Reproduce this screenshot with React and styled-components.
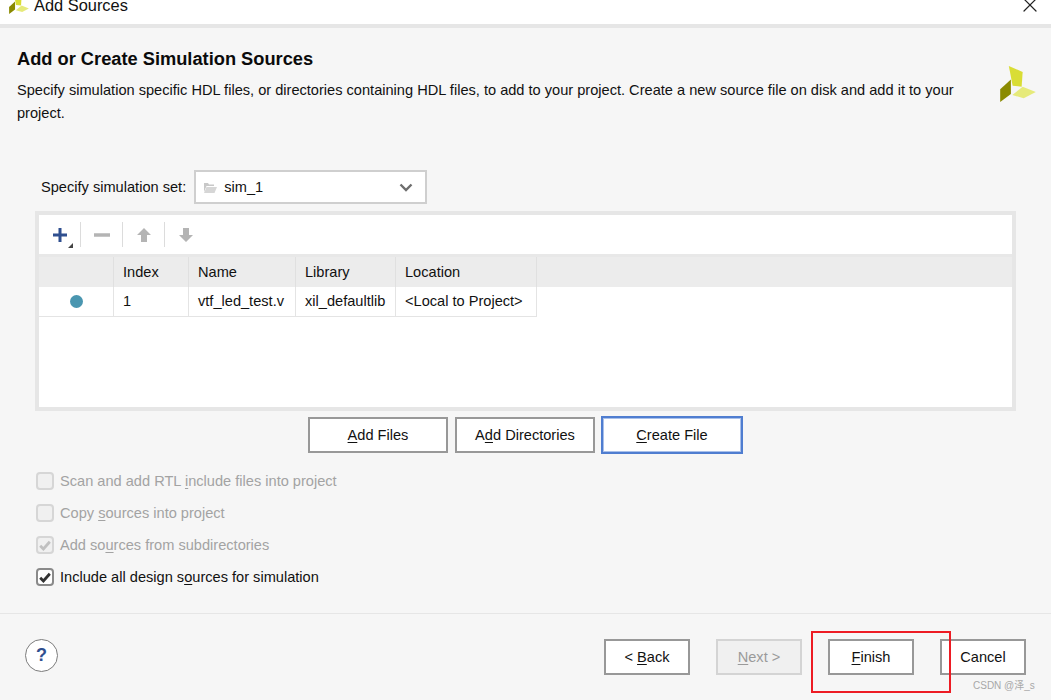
import React from 'react';
import styled, { createGlobalStyle } from 'styled-components';
import { X } from 'lucide-react';

const GlobalStyle = createGlobalStyle`
  html, body {
    margin: 0;
    padding: 0;
    background: #f6f6f6;
  }
  body {
    font-family: "Liberation Sans", Arial, sans-serif;
    font-size: 14.6px;
    color: #111;
  }
`;

const Window = styled.div`
  position: relative;
  width: 1051px;
  height: 700px;
  overflow: hidden;
  background: #f6f6f6;
  display: flex;
  flex-direction: column;
`;

const TitleBar = styled.div`
  flex: none;
  box-sizing: border-box;
  height: 28px;
  background: #fff;
  border-bottom: 4px solid #e6e6e6;
  display: flex;
  align-items: flex-start;
  overflow: hidden;
  padding: 0 9px 0 9px;
`;

const TitleIcon = styled.svg`
  flex: none;
  width: 20px;
  height: 20px;
  margin-top: -6px;
`;

const TitleText = styled.span`
  font-size: 16.4px;
  line-height: 20px;
  margin: -5px 0 0 5px;
  flex: 1;
`;

const CloseIcon = styled(X)`
  flex: none;
  margin-top: -7px;
  width: 24px;
  height: 24px;
  color: #222;
`;

const Head = styled.div`
  display: flex;
  justify-content: space-between;
  padding: 20px 15px 0 17px;
`;

const HeadText = styled.div`
  width: 945px;
`;

const Heading = styled.h1`
  margin: 0 0 9px;
  font-size: 18.25px;
  line-height: 22px;
  font-weight: 700;
  color: #0b0b0b;
`;

const Description = styled.p`
  margin: 0;
  line-height: 23px;
`;

const BrandLogo = styled.svg`
  flex: none;
  width: 36px;
  height: 36px;
  margin-top: 18px;
`;

const SetRow = styled.div`
  display: flex;
  align-items: center;
  gap: 8px;
  margin: 45px 0 0 41px;
`;

const SetSelect = styled.div`
  box-sizing: border-box;
  width: 233px;
  height: 34px;
  background: #fff;
  border: 2px solid #cfcfcf;
  display: flex;
  align-items: center;
  padding: 0 12px 0 7px;
  gap: 7px;
`;

const SelectValue = styled.span`
  flex: 1;
`;

const Panel = styled.div`
  box-sizing: border-box;
  width: 981px;
  height: 200px;
  margin: 7px 0 0 35px;
  border: 4px solid #e6e6e6;
  background: #fff;
  display: flex;
  flex-direction: column;
`;

const Toolbar = styled.div`
  flex: none;
  box-sizing: border-box;
  height: 42px;
  border-bottom: 3px solid #e8e8e8;
  display: flex;
  align-items: center;
`;

const ToolButton = styled.div`
  position: relative;
  width: 41px;
  height: 26px;
  display: flex;
  align-items: center;
  justify-content: center;
`;

const ToolSep = styled.div`
  width: 1px;
  height: 25px;
  background: #dcdcdc;
`;

const MenuCorner = styled.span`
  position: absolute;
  right: 7px;
  bottom: 0;
  width: 0;
  height: 0;
  border-left: 5px solid transparent;
  border-bottom: 5px solid #444;
`;

const Table = styled.div`
  display: grid;
  grid-template-columns: 75px 75px 107px 100px 141px 1fr;
`;

const HeadCell = styled.div`
  box-sizing: border-box;
  height: 30px;
  line-height: 30px;
  background: #ececec;
  padding-left: 9px;
  border-right: ${p => (p.$last ? 'none' : '1px solid #e0e0e0')};
`;

const Cell = styled.div`
  box-sizing: border-box;
  height: 30px;
  line-height: 29px;
  padding-left: 9px;
  border-bottom: ${p => (p.$empty ? 'none' : '1px solid #e4e4e4')};
  border-right: ${p => (p.$empty ? 'none' : '1px solid #e4e4e4')};
  display: flex;
  align-items: center;
  justify-content: ${p => (p.$center ? 'center' : 'flex-start')};
`;

const StatusDot = styled.span`
  display: block;
  width: 13px;
  height: 13px;
  border-radius: 50%;
  background: #4a96b0;
  margin: 0 0 0 -9px;
`;

const Actions = styled.div`
  display: flex;
  align-items: center;
  height: 38px;
  margin: 5px 0 0 308px;
`;

const PushButton = styled.div`
  box-sizing: border-box;
  width: ${p => p.$width}px;
  height: ${p => (p.$focus ? 38 : 36)}px;
  margin-right: ${p => p.$gap || 0}px;
  background: ${p => (p.$disabled ? '#f0f0f0' : '#fff')};
  color: ${p => (p.$disabled ? '#9a9a9a' : '#111')};
  border: ${p => {
    if (p.$focus) return '2px solid #4f7dd0';
    if (p.$disabled) return '2px solid #d4d4d4';
    return '2px solid #989898';
  }};
  box-shadow: ${p => (p.$focus ? 'inset 0 0 0 1px #a9c0ea' : 'none')};
  display: flex;
  align-items: center;
  justify-content: center;
`;

const Key = styled.span`
  text-decoration: underline;
  text-underline-offset: 2px;
`;

const Options = styled.div`
  display: flex;
  flex-direction: column;
  margin: 11px 0 0 36px;
`;

const Option = styled.div`
  height: 32px;
  display: flex;
  align-items: center;
  gap: 6px;
  color: ${p => (p.$disabled ? '#a3a3a3' : '#111')};
`;

const CheckBox = styled.span`
  box-sizing: border-box;
  width: 18px;
  height: 18px;
  border-radius: 4px;
  border: 2px solid ${p => (p.$disabled ? '#d6d6d6' : '#8a8a8a')};
  background: ${p => (p.$disabled ? '#f0f0f0' : '#fff')};
  display: flex;
  align-items: center;
  justify-content: center;
`;

const Footer = styled.div`
  flex: 1;
  margin-top: 20px;
  border-top: 1px solid #e6e6e6;
  padding: 25px 25px 0;
  display: flex;
  align-items: flex-start;
  gap: 26px;
`;

const HelpButton = styled.div`
  box-sizing: border-box;
  width: 33px;
  height: 33px;
  margin-right: auto;
  border-radius: 50%;
  border: 1px solid #7c7c7c;
  background: #fff;
  color: #2f4f8f;
  font-weight: 700;
  font-size: 18px;
  display: flex;
  align-items: center;
  justify-content: center;
`;

const Highlight = styled.div`
  position: absolute;
  left: 811px;
  top: 631px;
  width: 140px;
  height: 62px;
  box-sizing: border-box;
  border: 2px solid #ed1c24;
`;

const Watermark = styled.span`
  position: absolute;
  left: 973px;
  top: 679px;
  font-size: 10px;
  line-height: 13px;
  color: #a8a8a8;
  font-family: "Liberation Sans", "Noto Sans CJK SC", sans-serif;
`;

const LogoShapes = () => (
  <>
    <polygon points="0,67 31,39 31,81 0,104" fill="#8a8a00" />
    <polygon points="25,0 65,17 62,60 36,57" fill="#d9dd35" />
    <polygon points="35,84 65,60 103,75 68,93" fill="#e6ea7a" />
  </>
);

const PlusIcon = () => (
  <svg width="16" height="16" viewBox="0 0 16 16">
    <path d="M8 1v14M1 8h14" stroke="#2f4f8f" strokeWidth="3" fill="none" />
  </svg>
);

const MinusIcon = () => (
  <svg width="16" height="16" viewBox="0 0 16 16">
    <path d="M0 8h16" stroke="#b4b4b4" strokeWidth="3.5" fill="none" />
  </svg>
);

const ArrowIcon = ({ down }) => (
  <svg width="14" height="16" viewBox="0 0 14 16">
    <path
      d={down ? 'M4 1h6v7h4l-7 7-7-7h4z' : 'M7 1l7 7h-4v7H4V8H0z'}
      fill="#b4b4b4"
    />
  </svg>
);

const FolderIcon = () => (
  <svg width="14" height="13" viewBox="0 0 14 13">
    <path d="M1 2h4l1 1.5h5V5H3.5L1 11z" fill="#c8c8c8" />
    <path d="M3.5 6H14l-2.5 6H1z" fill="#d6d6d6" />
  </svg>
);

const ChevronIcon = () => (
  <svg width="14" height="9" viewBox="0 0 14 9">
    <path d="M1.5 1.5L7 7l5.5-5.5" stroke="#6e6e6e" strokeWidth="2.4" fill="none" />
  </svg>
);

const CheckMark = ({ disabled }) => (
  <svg width="12" height="11" viewBox="0 0 12 11">
    <path
      d="M1.2 5.8L4.4 9 10.8 1.8"
      stroke={disabled ? '#c0c0c0' : '#333'}
      strokeWidth="2.8"
      fill="none"
    />
  </svg>
);

export default function App() {
  return (
    <Window>
      <GlobalStyle />
      <TitleBar>
        <TitleIcon viewBox="0 0 103 104"><LogoShapes /></TitleIcon>
        <TitleText>Add Sources</TitleText>
        <CloseIcon strokeWidth={1.2} />
      </TitleBar>

      <Head>
        <HeadText>
          <Heading>Add or Create Simulation Sources</Heading>
          <Description>
            Specify simulation specific HDL files, or directories containing HDL files, to add to your project. Create a new source file on disk and add it to your project.
          </Description>
        </HeadText>
        <BrandLogo viewBox="0 0 103 104"><LogoShapes /></BrandLogo>
      </Head>

      <SetRow>
        <span>Specify simulation set:</span>
        <SetSelect>
          <FolderIcon />
          <SelectValue>sim_1</SelectValue>
          <ChevronIcon />
        </SetSelect>
      </SetRow>

      <Panel>
        <Toolbar>
          <ToolButton><PlusIcon /><MenuCorner /></ToolButton>
          <ToolSep />
          <ToolButton><MinusIcon /></ToolButton>
          <ToolSep />
          <ToolButton><ArrowIcon /></ToolButton>
          <ToolSep />
          <ToolButton><ArrowIcon down /></ToolButton>
        </Toolbar>
        <Table>
          <HeadCell />
          <HeadCell>Index</HeadCell>
          <HeadCell>Name</HeadCell>
          <HeadCell>Library</HeadCell>
          <HeadCell>Location</HeadCell>
          <HeadCell $last />
          <Cell $center><StatusDot /></Cell>
          <Cell>1</Cell>
          <Cell>vtf_led_test.v</Cell>
          <Cell>xil_defaultlib</Cell>
          <Cell>&lt;Local to Project&gt;</Cell>
          <Cell $empty />
        </Table>
      </Panel>

      <Actions>
        <PushButton $width={140} $gap={7}><span><Key>A</Key>dd Files</span></PushButton>
        <PushButton $width={140} $gap={6}><span>A<Key>d</Key>d Directories</span></PushButton>
        <PushButton $width={142} $focus><span><Key>C</Key>reate File</span></PushButton>
      </Actions>

      <Options>
        <Option $disabled>
          <CheckBox $disabled />
          <span>Scan and add RTL <Key>i</Key>nclude files into project</span>
        </Option>
        <Option $disabled>
          <CheckBox $disabled />
          <span>Copy <Key>s</Key>ources into project</span>
        </Option>
        <Option $disabled>
          <CheckBox $disabled><CheckMark disabled /></CheckBox>
          <span>Add so<Key>u</Key>rces from subdirectories</span>
        </Option>
        <Option>
          <CheckBox><CheckMark /></CheckBox>
          <span>Include all design s<Key>o</Key>urces for simulation</span>
        </Option>
      </Options>

      <Footer>
        <HelpButton>?</HelpButton>
        <PushButton $width={86}><span>&lt; <Key>B</Key>ack</span></PushButton>
        <PushButton $width={86} $disabled><span><Key>N</Key>ext &gt;</span></PushButton>
        <PushButton $width={86}><span><Key>F</Key>inish</span></PushButton>
        <PushButton $width={86}><span>Cancel</span></PushButton>
      </Footer>

      <Highlight />
      <Watermark>CSDN @泽_s</Watermark>
    </Window>
  );
}
